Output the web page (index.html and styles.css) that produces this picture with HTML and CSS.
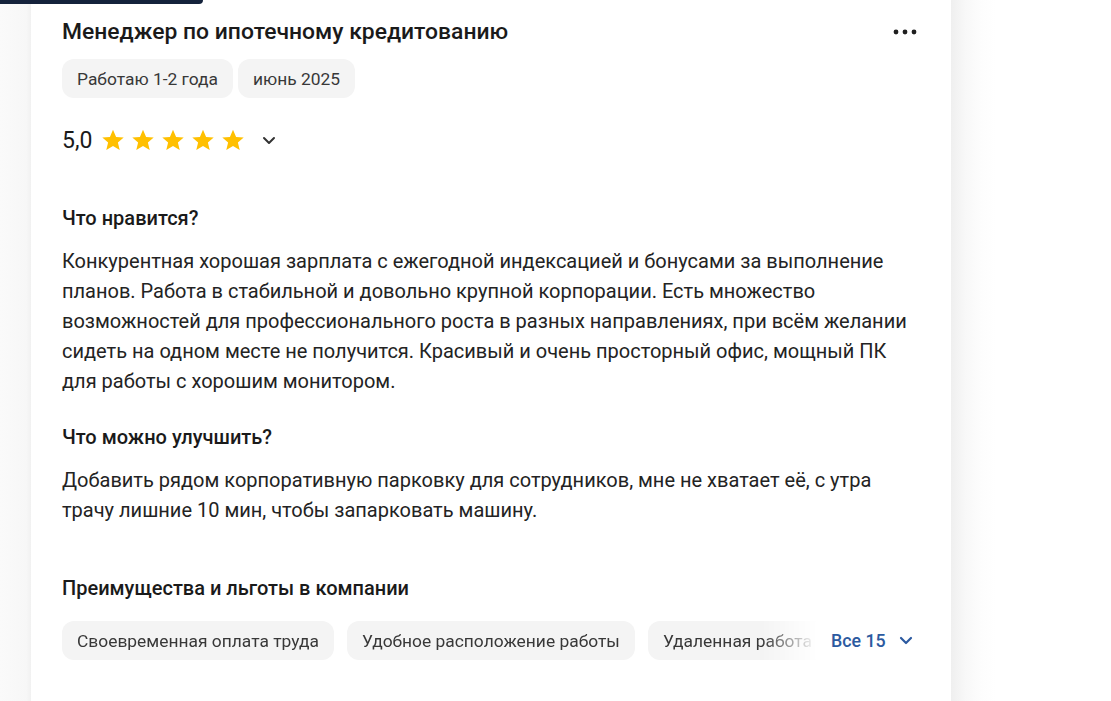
FILE: index.html
```html
<!DOCTYPE html>
<html lang="ru">
<head>
<meta charset="utf-8">
<link rel="stylesheet" href="styles.css">
</head>
<body>
<div class="topbar"></div>
<div class="page">
  <div class="side"></div>
  <main class="card">
    <div class="head">
      <h1 class="title">Менеджер по ипотечному кредитованию</h1>
      <button class="more" aria-label="Ещё">
        <svg width="24" height="6" viewBox="0 0 24 6"><circle cx="3" cy="3" r="2.4" fill="#1f1f1f"/><circle cx="12" cy="3" r="2.4" fill="#1f1f1f"/><circle cx="21" cy="3" r="2.4" fill="#1f1f1f"/></svg>
      </button>
    </div>
    <div class="tags">
      <span class="tag">Работаю 1-2 года</span>
      <span class="tag">июнь 2025</span>
    </div>
    <div class="rating">
      <span class="score">5,0</span>
      <span class="stars">
        <svg class="star" viewBox="0 0 24 24"><path d="M12 1.8l3.1 7.1 7.6.6-5.8 5 1.8 7.5L12 18l-6.7 4 1.8-7.5-5.8-5 7.6-.6z"/></svg>
        <svg class="star" viewBox="0 0 24 24"><path d="M12 1.8l3.1 7.1 7.6.6-5.8 5 1.8 7.5L12 18l-6.7 4 1.8-7.5-5.8-5 7.6-.6z"/></svg>
        <svg class="star" viewBox="0 0 24 24"><path d="M12 1.8l3.1 7.1 7.6.6-5.8 5 1.8 7.5L12 18l-6.7 4 1.8-7.5-5.8-5 7.6-.6z"/></svg>
        <svg class="star" viewBox="0 0 24 24"><path d="M12 1.8l3.1 7.1 7.6.6-5.8 5 1.8 7.5L12 18l-6.7 4 1.8-7.5-5.8-5 7.6-.6z"/></svg>
        <svg class="star" viewBox="0 0 24 24"><path d="M12 1.8l3.1 7.1 7.6.6-5.8 5 1.8 7.5L12 18l-6.7 4 1.8-7.5-5.8-5 7.6-.6z"/></svg>
      </span>
      <svg class="chev" width="14" height="9" viewBox="0 0 14 9"><path d="M2 2l5 5 5-5" fill="none" stroke="#333" stroke-width="2" stroke-linecap="round" stroke-linejoin="round"/></svg>
    </div>

    <section class="block">
      <h2 class="subhead">Что нравится?</h2>
      <p class="text">Конкурентная хорошая зарплата с ежегодной индексацией и бонусами за выполнение планов. Работа в стабильной и довольно крупной корпорации. Есть множество возможностей для профессионального роста в разных направлениях, при всём желании сидеть на одном месте не получится. Красивый и очень просторный офис, мощный ПК для работы с хорошим монитором.</p>
    </section>
    <section class="block">
      <h2 class="subhead">Что можно улучшить?</h2>
      <p class="text">Добавить рядом корпоративную парковку для сотрудников, мне не хватает её, с утра трачу лишние 10 мин, чтобы запарковать машину.</p>
    </section>

    <section class="benefits">
      <h2 class="subhead">Преимущества и льготы в компании</h2>
      <div class="brow">
        <div class="btags">
          <span class="tag">Своевременная оплата труда</span>
          <span class="tag">Удобное расположение работы</span>
          <span class="tag">Удаленная работа</span>
        </div>
        <button class="all">Все 15
          <svg width="14" height="9" viewBox="0 0 14 9"><path d="M2 2l5 5 5-5" fill="none" stroke="#2c5aa0" stroke-width="2.2" stroke-linecap="round" stroke-linejoin="round"/></svg>
        </button>
      </div>
    </section>
  </main>
  <div class="rightside"></div>
</div>
</body>
</html>
```

FILE: styles.css
```css
* { box-sizing: border-box; }
html, body { margin: 0; padding: 0; }
body {
  background: #fff;
  font-family: Roboto, "Noto Sans", Arial, sans-serif;
  color: #1f1f1f;
  width: 1111px;
  height: 701px;
  overflow: hidden;
  position: relative;
}
.topbar {
  position: absolute;
  left: 0;
  top: 0;
  width: 203px;
  height: 4px;
  background: #14223b;
  border-bottom-right-radius: 6px;
  z-index: 2;
}
.page {
  display: flex;
  height: 701px;
}
.side {
  width: 31px;
  flex: none;
  background: linear-gradient(to right, #fafafa 0%, #f7f7f7 85%, #f1f1f1 100%);
}
.card {
  width: 920px;
  flex: none;
  background: #fff;
  padding: 18px 31px 0 31px;
}
.rightside {
  flex: 1;
  background: linear-gradient(to right, #efefef 0px, #f8f8f8 14px, #fdfdfd 30px, #fff 45px);
}
.head {
  display: flex;
  align-items: center;
  justify-content: space-between;
  height: 28px;
}
.title {
  margin: 0;
  font-size: 22.9px;
  font-weight: 500;
  line-height: 28px;
  color: #1a1a1a;
}
.more {
  border: 0;
  background: none;
  padding: 0;
  margin-right: 3px;
  display: flex;
}
.tags {
  display: flex;
  gap: 5px;
  margin-top: 13px;
}
.tag {
  display: inline-flex;
  align-items: center;
  height: 39px;
  padding: 0 15px;
  background: #f4f4f4;
  border-radius: 12px;
  font-size: 17.4px;
  color: #383838;
  white-space: nowrap;
}
.rating {
  display: flex;
  align-items: center;
  margin-top: 26px;
  height: 32px;
}
.score {
  font-size: 23px;
  color: #1a1a1a;
  margin-right: 9px;
}
.stars { display: flex; gap: 6px; }
.star { width: 24px; height: 24px; fill: #ffc000; }
.chev { margin-left: 17px; }
.block { margin-top: 50px; }
.block + .block { margin-top: 29px; }
.subhead {
  margin: 0;
  font-size: 20px;
  font-weight: 500;
  line-height: 24px;
  color: #1a1a1a;
}
.text {
  margin: 16px 0 0;
  font-size: 20px;
  line-height: 30px;
  color: #232323;
  max-width: 858px;
}
.benefits { margin-top: 51px; }
.brow {
  display: flex;
  align-items: center;
  margin-top: 21px;
}
.btags {
  display: flex;
  gap: 13px;
  width: 762px;
  overflow: hidden;
  -webkit-mask-image: linear-gradient(to right, #000 0, #000 700px, transparent 755px);
  mask-image: linear-gradient(to right, #000 0, #000 700px, transparent 755px);
}
.all {
  border: 0;
  background: none;
  padding: 0;
  margin-left: 7px;
  display: flex;
  align-items: center;
  gap: 13px;
  font-family: inherit;
  font-size: 17.8px;
  font-weight: 500;
  color: #2c5aa0;
}
```
